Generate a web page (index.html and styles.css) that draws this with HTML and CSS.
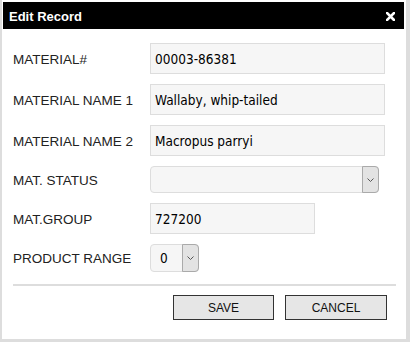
FILE: index.html
```html
<!DOCTYPE html>
<html lang="en">
  <head>
    <meta charset="UTF-8" />
    <meta name="viewport" content="width=device-width, initial-scale=1.0" />
    <title>Edit Record</title>
    <link rel="stylesheet" href="styles.css">
  </head>
  <body>
    <div class="dialog">
      <div class="titlebar">
        <span class="title">Edit Record</span>
        <button class="close" title="Close">
          <svg width="9" height="9" viewBox="0 0 9 9">
            <path d="M1 1 L8 8 M8 1 L1 8" stroke="#fff" stroke-width="2.6" stroke-linecap="square" />
          </svg>
        </button>
      </div>

      <div class="content">
        <div class="form">
          <div class="row">
            <label class="lbl">MATERIAL#</label>
            <input class="field" type="text" value="00003-86381" />
          </div>
          <div class="row">
            <label class="lbl">MATERIAL NAME 1</label>
            <input class="field" type="text" value="Wallaby, whip-tailed" />
          </div>
          <div class="row">
            <label class="lbl">MATERIAL NAME 2</label>
            <input class="field" type="text" value="Macropus parryi" />
          </div>
          <div class="row">
            <label class="lbl">MAT. STATUS</label>
            <div class="select status">
              <span class="value"></span>
              <span class="arrow">
                <svg width="7" height="4" viewBox="0 0 7 4"><path d="M0.5 0.5 L3.5 3.5 L6.5 0.5" fill="none" stroke="#555" stroke-width="1" /></svg>
              </span>
            </div>
          </div>
          <div class="row">
            <label class="lbl">MAT.GROUP</label>
            <input class="field short" type="text" value="727200" />
          </div>
          <div class="row">
            <label class="lbl">PRODUCT RANGE</label>
            <div class="select range">
              <span class="value">0</span>
              <span class="arrow">
                <svg width="7" height="4" viewBox="0 0 7 4"><path d="M0.5 0.5 L3.5 3.5 L6.5 0.5" fill="none" stroke="#555" stroke-width="1" /></svg>
              </span>
            </div>
          </div>
        </div>

        <div class="buttons">
          <button class="btn">SAVE</button>
          <button class="btn">CANCEL</button>
        </div>
      </div>
    </div>
  </body>
</html>
```

FILE: styles.css
```css
* {
  margin: 0;
  padding: 0;
  box-sizing: border-box;
}
body {
  background-color: white;
  font-family: "Liberation Sans", Arial, sans-serif;
}
.dialog {
  width: 410px;
  height: 342px;
  border-left: 2px solid #dddddd;
  border-right: 4px solid #dddddd;
  border-bottom: 3px solid #dddddd;
  padding: 2px 2px 0 1px;
  background-color: white;
}
.titlebar {
  height: 27px;
  background-color: black;
  color: white;
  display: flex;
  align-items: center;
  justify-content: space-between;
  padding: 0 9px 0 6px;
}
.title {
  font-size: 13px;
  font-weight: bold;
  padding-top: 1px;
}
.close {
  border: none;
  background: none;
  width: 9px;
  height: 9px;
  display: flex;
  margin-top: 1px;
}
.content {
  padding: 14px 8px 0 10px;
}
.form {
  display: flex;
  flex-direction: column;
  gap: 10px;
  padding-bottom: 12px;
  border-bottom: 2px solid #dddddd;
}
.row {
  display: flex;
  align-items: center;
}
.lbl {
  width: 137px;
  font-size: 13.5px;
  color: #222222;
  padding-top: 1px;
}
.field {
  width: 235px;
  height: 31px;
  border: 1px solid #dddddd;
  background-color: #f6f6f6;
  font-family: "DejaVu Sans Condensed", "DejaVu Sans", sans-serif;
  font-size: 13.5px;
  color: black;
  padding: 0 4px;
  outline: none;
}
.field.short {
  width: 165px;
}
.select {
  display: flex;
  border: 1px solid #dddddd;
  border-radius: 4px;
  background-color: #f6f6f6;
}
.select .value {
  flex: 1;
  display: flex;
  align-items: center;
  padding-left: 9px;
  font-family: "DejaVu Sans Condensed", "DejaVu Sans", sans-serif;
  font-size: 13.5px;
  color: black;
}
.select .arrow {
  width: 17px;
  display: flex;
  align-items: center;
  justify-content: center;
  background-color: #e3e3e3;
  border: 1px solid #aaaaaa;
  border-radius: 0 4px 4px 0;
  margin: -1px -1px -1px 0;
}
.status {
  width: 229px;
  height: 27px;
}
.range {
  width: 49px;
  height: 28px;
}
.buttons {
  display: flex;
  justify-content: flex-end;
  gap: 11px;
  padding: 9px 9px 0 0;
}
.btn {
  width: 101px;
  height: 25px;
  border: 1px solid #333333;
  background-color: #e6e6e6;
  font-family: "Liberation Sans", Arial, sans-serif;
  font-size: 12px;
  color: #111111;
}
.btn + .btn {
  width: 102px;
}
```
